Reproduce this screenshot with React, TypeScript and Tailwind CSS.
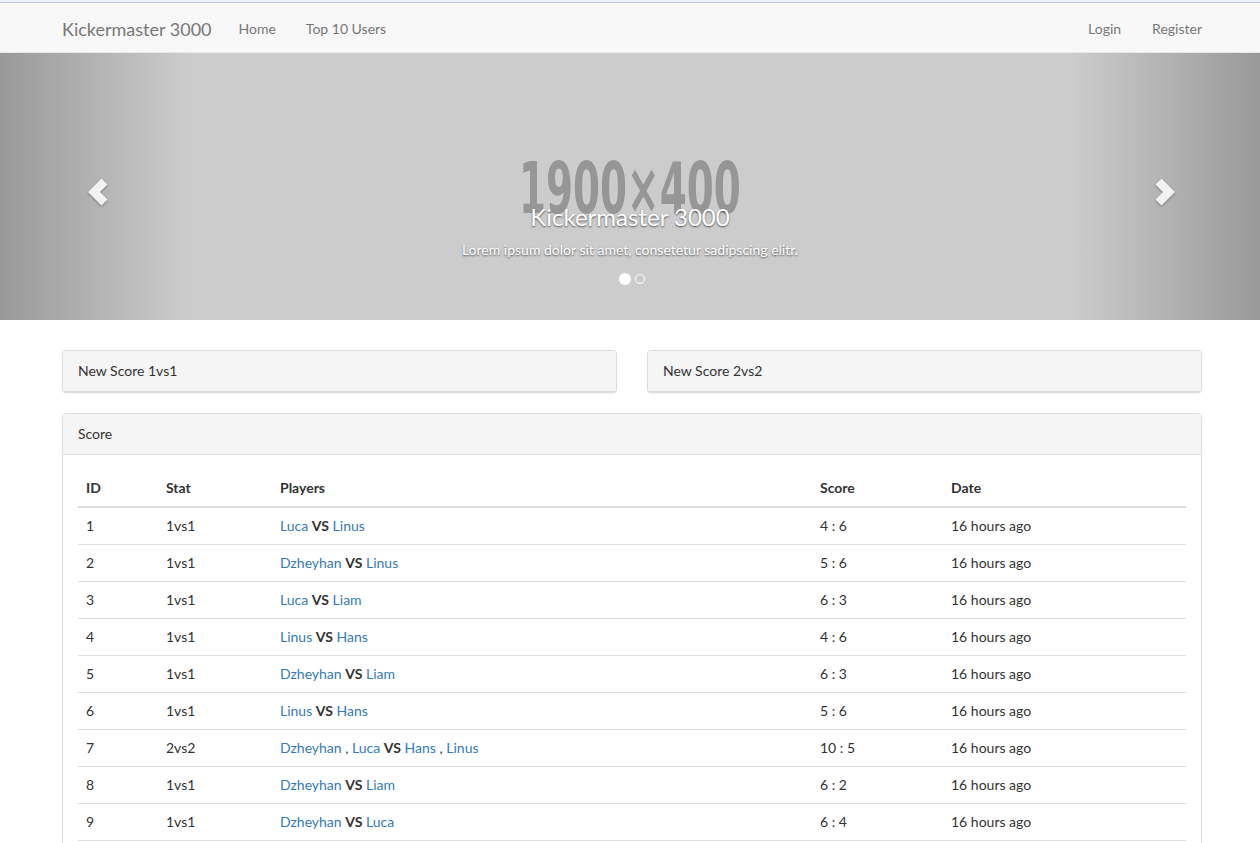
import React from "react";

type Row = {
  id: number;
  stat: string;
  a: string[];
  b: string[];
  score: string;
};

const rows: Row[] = [
  { id: 1, stat: "1vs1", a: ["Luca"], b: ["Linus"], score: "4 : 6" },
  { id: 2, stat: "1vs1", a: ["Dzheyhan"], b: ["Linus"], score: "5 : 6" },
  { id: 3, stat: "1vs1", a: ["Luca"], b: ["Liam"], score: "6 : 3" },
  { id: 4, stat: "1vs1", a: ["Linus"], b: ["Hans"], score: "4 : 6" },
  { id: 5, stat: "1vs1", a: ["Dzheyhan"], b: ["Liam"], score: "6 : 3" },
  { id: 6, stat: "1vs1", a: ["Linus"], b: ["Hans"], score: "5 : 6" },
  { id: 7, stat: "2vs2", a: ["Dzheyhan", "Luca"], b: ["Hans", "Linus"], score: "10 : 5" },
  { id: 8, stat: "1vs1", a: ["Dzheyhan"], b: ["Liam"], score: "6 : 2" },
  { id: 9, stat: "1vs1", a: ["Dzheyhan"], b: ["Luca"], score: "6 : 4" },
  { id: 10, stat: "1vs1", a: ["Luca"], b: ["Hans"], score: "6 : 5" },
];

function Team({ names }: { names: string[] }) {
  return (
    <>
      {names.map((n, i) => (
        <React.Fragment key={i}>
          {i > 0 && " , "}
          <a className="text-[#337ab7]">{n}</a>
        </React.Fragment>
      ))}
    </>
  );
}

function ChevronLeft() {
  return (
    <svg width="24" height="32" viewBox="0 0 24 32" className="[filter:drop-shadow(0_1px_1px_rgba(0,0,0,0.35))]">
      <polygon points="2,16 15.5,2.5 21.5,8.5 14,16 21.5,23.5 15.5,29.5" fill="#f2f2f2" />
    </svg>
  );
}

function ChevronRight() {
  return (
    <svg width="24" height="32" viewBox="0 0 24 32" className="[filter:drop-shadow(0_1px_1px_rgba(0,0,0,0.35))]">
      <polygon points="22,16 8.5,2.5 2.5,8.5 10,16 2.5,23.5 8.5,29.5" fill="#f2f2f2" />
    </svg>
  );
}

export default function App() {
  return (
    <div className="font-['Lato',sans-serif] text-[14px] leading-[20px] text-[#333] bg-white min-h-screen">
      {/* top line */}
      <div className="h-[2px] bg-[#eef2f8]" />
      <div className="h-px bg-[#b9cbe5]" />

      {/* navbar */}
      <nav className="h-[50px] bg-[#f8f8f8] border-b border-[#e7e7e7]">
        <div className="ml-[62px] mr-[58px] h-full flex items-center pt-[2px]">
          <a className="text-[18px] leading-[20px] text-[#777] pr-[12px]">Kickermaster 3000</a>
          <a className="px-[15px] text-[#777]">Home</a>
          <a className="px-[15px] text-[#777]">Top 10 Users</a>
          <div className="ml-auto flex items-center">
            <a className="pl-[15px] pr-[16px] text-[#777]">Login</a>
            <a className="pl-[15px] text-[#777]">Register</a>
          </div>
        </div>
      </nav>

      {/* carousel */}
      <div className="relative h-[267px] bg-[#cccccc] overflow-hidden">
        <div className="h-full flex items-center justify-center pt-[2px]">
          <span className="font-['DejaVu_Sans_Condensed','DejaVu_Sans',sans-serif] font-bold text-[72px] leading-none text-[#969696] scale-x-[0.6] whitespace-nowrap">
            1900×400
          </span>
        </div>
        <div className="absolute left-0 top-0 bottom-0 w-[189px] bg-[linear-gradient(to_right,rgba(0,0,0,0.25),rgba(0,0,0,0))]" />
        <div className="absolute right-0 top-0 bottom-0 w-[189px] bg-[linear-gradient(to_left,rgba(0,0,0,0.25),rgba(0,0,0,0))]" />
        <div className="absolute left-[86px] top-[123px]">
          <ChevronLeft />
        </div>
        <div className="absolute left-[1153px] top-[123px]">
          <ChevronRight />
        </div>
        <div className="absolute left-[20%] right-[20%] bottom-[20px] pt-[20px] pb-[30px] text-center text-white [text-shadow:0_1px_2px_rgba(0,0,0,0.6)]">
          <h3 className="text-[24px] leading-[1.1] mt-[20px] mb-[10px] font-normal">Kickermaster 3000</h3>
          <p className="mb-[10px]">Lorem ipsum dolor sit amet, consetetur sadipscing elitr.</p>
        </div>
        <div className="absolute left-0 right-0 bottom-[35px] flex items-center justify-center gap-[4px] pl-[4px]">
          <span className="w-[12px] h-[12px] rounded-full bg-white" />
          <span className="w-[10px] h-[10px] rounded-full border border-white" />
        </div>
      </div>

      {/* content */}
      <div className="ml-[62px] w-[1140px] pt-[30px]">
        <div className="flex gap-[30px] mb-[20px]">
          <div className="flex-1 border border-[#ddd] rounded-[4px] shadow-[0_1px_1px_rgba(0,0,0,0.05)] bg-white">
            <div className="bg-[#f5f5f5] px-[15px] py-[10px] border-b border-[#ddd] rounded-t-[3px]">New Score 1vs1</div>
          </div>
          <div className="flex-1 border border-[#ddd] rounded-[4px] shadow-[0_1px_1px_rgba(0,0,0,0.05)] bg-white">
            <div className="bg-[#f5f5f5] px-[15px] py-[10px] border-b border-[#ddd] rounded-t-[3px]">New Score 2vs2</div>
          </div>
        </div>

        <div className="border border-[#ddd] rounded-[4px] shadow-[0_1px_1px_rgba(0,0,0,0.05)] bg-white">
          <div className="bg-[#f5f5f5] px-[15px] py-[10px] border-b border-[#ddd] rounded-t-[3px]">Score</div>
          <div className="p-[15px]">
            <table className="w-full border-collapse">
              <thead>
                <tr>
                  <th className="w-[80px] text-left font-bold p-[8px] border-b-2 border-[#ddd] align-bottom">ID</th>
                  <th className="w-[114px] text-left font-bold p-[8px] border-b-2 border-[#ddd] align-bottom">Stat</th>
                  <th className="w-[540px] text-left font-bold p-[8px] border-b-2 border-[#ddd] align-bottom">Players</th>
                  <th className="w-[131px] text-left font-bold p-[8px] border-b-2 border-[#ddd] align-bottom">Score</th>
                  <th className="text-left font-bold p-[8px] border-b-2 border-[#ddd] align-bottom">Date</th>
                </tr>
              </thead>
              <tbody>
                {rows.map((r) => (
                  <tr key={r.id}>
                    <td className="p-[8px] border-t border-[#ddd]">{r.id}</td>
                    <td className="p-[8px] border-t border-[#ddd]">{r.stat}</td>
                    <td className="p-[8px] border-t border-[#ddd]">
                      <Team names={r.a} /> <b className="font-bold">VS</b> <Team names={r.b} />
                    </td>
                    <td className="p-[8px] border-t border-[#ddd]">{r.score}</td>
                    <td className="p-[8px] border-t border-[#ddd]">16 hours ago</td>
                  </tr>
                ))}
              </tbody>
            </table>
          </div>
        </div>
      </div>
    </div>
  );
}
